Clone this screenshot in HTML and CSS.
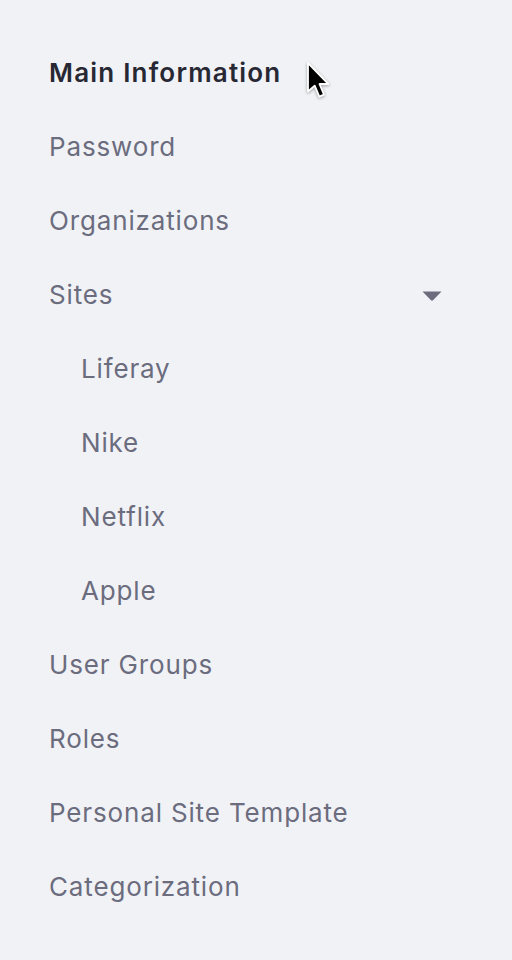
FILE: index.html
```html
<!DOCTYPE html>
<html>
<head>
<meta charset="utf-8">
<link rel="stylesheet" href="styles.css">
</head>
<body>
<nav class="menu">
  <div class="item active">Main Information
    <svg class="cursor" width="28" height="40" viewBox="0 0 28 40"><path d="M2 2 L2 30.5 L8.7 24.6 L13.3 35.6 L18 33.6 L13.5 23 L22.4 23 Z" fill="#000" stroke="#fff" stroke-width="1.8" stroke-linejoin="round"/></svg>
  </div>
  <div class="item">Password</div>
  <div class="item">Organizations</div>
  <div class="item toggle">Sites
    <svg class="caret" width="20" height="10" viewBox="0 0 20 10"><path d="M0.5 0.5 H19.5 L11 9.3 Q10 10.2 9 9.3 Z" fill="#6b6c7e"/></svg>
  </div>
  <div class="item sub">Liferay</div>
  <div class="item sub">Nike</div>
  <div class="item sub">Netflix</div>
  <div class="item sub">Apple</div>
  <div class="item">User Groups</div>
  <div class="item">Roles</div>
  <div class="item">Personal Site Template</div>
  <div class="item">Categorization</div>
</nav>
</body>
</html>
```
FILE: styles.css
```css
html, body {
  margin: 0;
  padding: 0;
  background: #f1f2f6;
}
body {
  width: 512px;
  height: 960px;
  font-family: Inter, "Noto Sans", sans-serif;
}
.menu {
  display: flex;
  flex-direction: column;
  padding: 35px 70px 0 49px;
}
.item {
  position: relative;
  height: 74px;
  display: flex;
  align-items: center;
  font-size: 26px;
  color: #6b6c7e;
  letter-spacing: 0.85px;
}
.item.active {
  color: #272833;
  font-weight: 600;
  letter-spacing: 1.2px;
}
.item.sub {
  padding-left: 32px;
}
.toggle {
  justify-content: space-between;
}
.caret {
  margin-top: 4px;
}
.cursor {
  position: absolute;
  left: 257px;
  top: 26px;
  filter: drop-shadow(0 1px 1.5px rgba(0,0,0,0.35));
}
```
